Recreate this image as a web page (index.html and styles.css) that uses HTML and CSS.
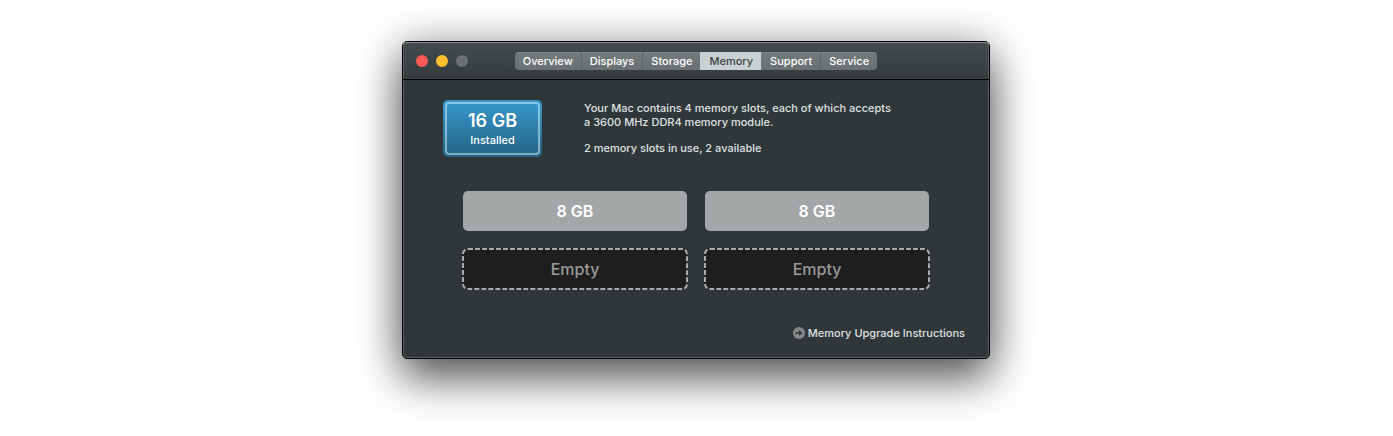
FILE: index.html
```html
<!DOCTYPE html>
<html lang="en">
<head>
<meta charset="utf-8">
<meta name="viewport" content="width=device-width, initial-scale=1">
<title>Memory</title>
<link rel="stylesheet" href="styles.css">
</head>
<body>
<main class="window">
  <header class="titlebar">
    <div class="lights">
      <button class="light light-close" type="button" aria-label="Close"></button>
      <button class="light light-minimize" type="button" aria-label="Minimize"></button>
      <button class="light light-zoom" type="button" aria-label="Zoom" disabled></button>
    </div>
    <nav class="tabs" aria-label="Sections">
      <button class="tab" type="button">Overview</button>
      <button class="tab" type="button">Displays</button>
      <button class="tab" type="button">Storage</button>
      <button class="tab tab-active" type="button" aria-current="page">Memory</button>
      <button class="tab" type="button">Support</button>
      <button class="tab" type="button">Service</button>
    </nav>
  </header>
  <section class="summary">
    <div class="badge">
      <div class="badge-frame">
        <strong class="badge-size">16 GB</strong>
        <span class="badge-label">Installed</span>
      </div>
    </div>
    <div class="description">
      <p>Your Mac contains 4 memory slots, each of which accepts<br>a 3600 MHz DDR4 memory module.</p>
      <p>2 memory slots in use, 2 available</p>
    </div>
  </section>
  <section class="slots">
    <div class="slot slot-filled">8 GB</div>
    <div class="slot slot-filled">8 GB</div>
    <div class="slot slot-empty"><svg class="dashes" aria-hidden="true"><rect class="dash-rect" x="1" y="1" rx="5"/></svg>Empty</div>
    <div class="slot slot-empty"><svg class="dashes" aria-hidden="true"><rect class="dash-rect" x="1" y="1" rx="5"/></svg>Empty</div>
  </section>
  <footer class="footer">
    <a class="help" href="#">
      <svg class="help-icon" viewBox="0 0 12 12" aria-hidden="true">
        <circle cx="6" cy="6" r="6" fill="#868888"/>
        <path d="M2.5 6h4.5" stroke="#30373a" stroke-width="1.6"/>
        <path d="M6 3l3.5 3L6 9z" fill="#30373a"/>
      </svg>
      <span>Memory Upgrade Instructions</span>
    </a>
  </footer>
</main>
</body>
</html>
```
FILE: styles.css
```css
* {
  box-sizing: border-box;
}

body {
  margin: 0;
  padding: 41px 17px 76px 16px;
  background: #fff;
  font-family: Inter, "Liberation Sans", sans-serif;
  font-size: 11px;
  font-weight: 500;
  line-height: 14px;
  color: #dfe1e1;
}

button {
  font: inherit;
  border: 0;
  padding: 0;
}

.window {
  max-width: 588px;
  margin: 0 auto;
  border: 1px solid #000;
  border-radius: 5px;
  background: #2f373a;
  box-shadow:
    inset 0 0 0 1px #5b6264,
    0 20px 44px rgba(0, 0, 0, 0.6),
    0 0 44px rgba(0, 0, 0, 0.25);
}

.titlebar {
  display: grid;
  grid-template-columns: 1fr auto 1fr;
  align-items: center;
  height: 38px;
  padding: 0 13px;
  border-bottom: 1px solid #000;
  border-radius: 4px 4px 0 0;
  background: linear-gradient(#424b4d, #343c3e);
  box-shadow: inset 0 1px #858b8c, inset 1px 0 #5b6264, inset -1px 0 #5b6264;
}

.lights {
  display: flex;
  gap: 8px;
}

.light {
  width: 12px;
  height: 12px;
  border-radius: 50%;
}

.light-close {
  background: #fc5b55;
}

.light-minimize {
  background: #fac02f;
}

.light-zoom {
  background: #6b7173;
}

.tabs {
  display: flex;
  border-radius: 4px;
  overflow: hidden;
  background: linear-gradient(#727a7b, #6a7173);
  box-shadow: inset 0 1px #7e8586;
}

.tab {
  height: 18px;
  padding: 0 8px;
  background: none;
  color: #fff;
  line-height: 18px;
}

.tab + .tab {
  border-left: 1px solid #5d6466;
}

.tab-active,
.tab-active + .tab {
  border-left-color: transparent;
}

.tab.tab-active {
  border-left-color: #c9d1d2;
  background: #c9d1d2;
  color: #3b4345;
}

.summary {
  display: flex;
  gap: 42px;
  padding: 20px 40px 0;
}

.badge {
  flex: none;
  width: 99px;
  height: 57px;
  padding: 2px;
  border-radius: 5px;
  background: linear-gradient(#3899cd, #246384);
}

.badge-frame {
  display: flex;
  flex-direction: column;
  align-items: center;
  gap: 2px;
  height: 100%;
  padding-top: 7px;
  border: 2px solid rgba(220, 250, 255, 0.5);
  border-radius: 4px;
  color: #fff;
}

.badge-size {
  font-size: 18px;
  font-weight: 600;
  line-height: 20px;
}

.description {
  padding-top: 1px;
}

.description p {
  margin: 0;
}

.description p + p {
  margin-top: 12px;
}

.slots {
  display: grid;
  grid-template-columns: 1fr 1fr;
  gap: 16px;
  padding: 33px 59px 0;
}

.slot {
  display: flex;
  align-items: center;
  justify-content: center;
  height: 42px;
  font-size: 16px;
}

.slot-filled {
  height: 40px;
  margin: 1px;
  border-radius: 5px;
  background: #a3a7a8;
  color: #fff;
  font-weight: 600;
}

.slot-empty {
  position: relative;
  border-radius: 6px;
  background: #1e1e1e;
  color: #999;
}

.dashes {
  position: absolute;
  inset: 0;
  width: 100%;
  height: 100%;
}

.dash-rect {
  width: calc(100% - 2px);
  height: calc(100% - 2px);
  fill: none;
  stroke: #aaacac;
  stroke-width: 2px;
  stroke-dasharray: 5 2;
}

.footer {
  display: flex;
  justify-content: flex-end;
  padding: 36px 24px 18px;
}

.help {
  display: flex;
  align-items: center;
  gap: 3px;
  color: inherit;
  text-decoration: none;
}

.help-icon {
  width: 12px;
  height: 12px;
}
```
